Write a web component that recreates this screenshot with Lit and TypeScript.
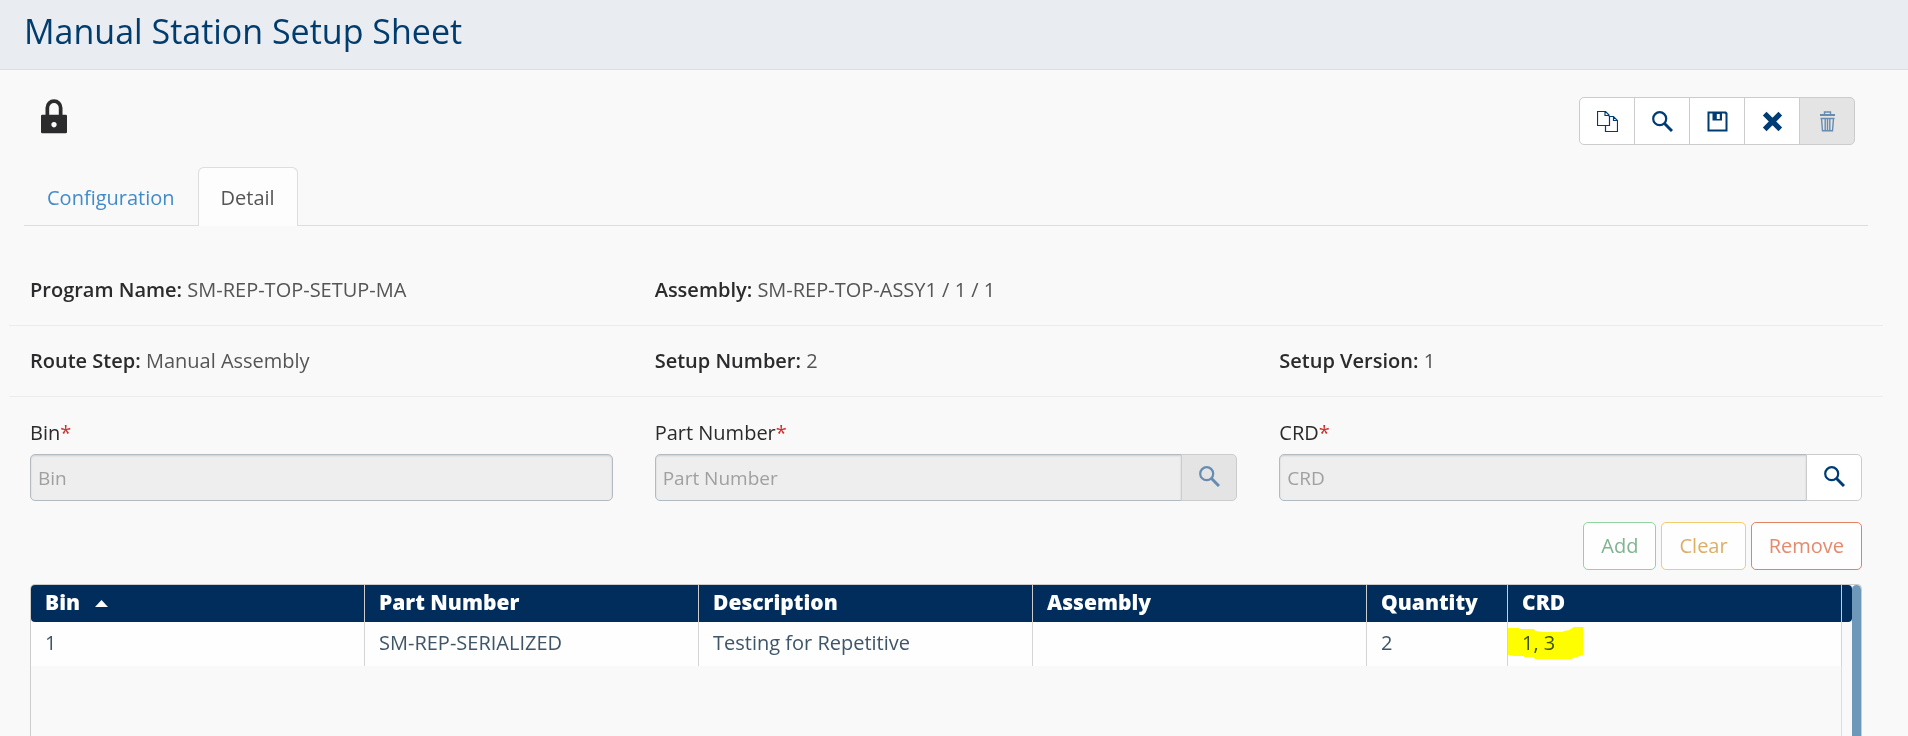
import { LitElement, html, css, svg, nothing } from "lit";
import { customElement, state } from "lit/decorators.js";

const icons = {
  copy: svg`<path d="M8 14.500H.5V.5h8l3.500 3.500v1.500M8 .5v4h4M8.500 14.500V20.500h12V9.500l-4-4h-4v9z M16.500 5.500v4h4" fill="none" stroke="currentColor" stroke-width="1.200"/>`,
  search: svg`<circle cx="7.700" cy="7.700" r="6.500" fill="none" stroke="currentColor" stroke-width="2.200"/>
    <path d="M12.500 12.500l7.500 7.500" stroke="currentColor" stroke-width="3"/>`,
  save: svg`<path fill="currentColor" fill-rule="evenodd" d="M.5.5h18.500l1.500 1.500v18.500H.5zM2.500 2.500v16h16V3.200l-1-.7h-2.500v7H5.500v-7zM9.800 3v5h3V3z"/>`,
  close: svg`<path d="M2.700 2.700l15.600 15.600M18.300 2.700L2.700 18.300" stroke="currentColor" stroke-width="5.200"/>`,
  trash: svg`<path d="M3 4h15" stroke="currentColor" stroke-width="2"/>
    <path d="M7.500 3V1h6v2M3.500 7.500h14M4.500 7.500l1 12.300h10l1-12.300M8.200 8v11M10.500 8v11M12.800 8v11" fill="none" stroke="currentColor" stroke-width="1.400"/>`,
};

type IconName = keyof typeof icons;
const icon = (name: IconName) =>
  html`<svg class="icon" viewBox="0 0 21 21" aria-hidden="true">${icons[name]}</svg>`;

@customElement("app-root")
export class AppRoot extends LitElement {
  static styles = css`
    :host { display: block; font: 400 20px/28px "Open Sans", sans-serif; color: #333; background: #f9f9f9; }
    * { box-sizing: border-box; }
    button, input { font: inherit; margin: 0; }
    .page { min-height: 100vh; display: flex; flex-direction: column; }
    .header { background: #e9ecf1; border-bottom: 1px solid #dcdfe3; padding: 7px 24px 14px; }
    .title { margin: 0; font-size: 34px; line-height: 48px; font-weight: 400; color: #003c6e; }
    .top { display: flex; justify-content: space-between; align-items: flex-start; padding: 27px 53px 0 40px; }
    .lock { width: 28px; height: 36px; margin-top: 1px; color: #2b2b2d; }
    .icon { width: 21px; height: 21px; display: block; }
    .tools { display: flex; }
    .tool { width: 56px; height: 48px; display: grid; place-items: center; padding: 0; background: #fff; border: 1px solid #ccc; color: #003c74; }
    .tool + .tool { margin-left: -1px; }
    .tool:first-child { border-radius: 5px 0 0 5px; }
    .tool:last-child { border-radius: 0 5px 5px 0; }
    .tool:disabled { background: #e4e4e4; color: #668cb1; }
    .tabs { display: flex; margin: 22px 40px 0 24px; border-bottom: 1px solid #ddd; }
    .tab { padding: 0 22px; height: 58px; line-height: 60px; color: #428bca; text-decoration: none; border: 1px solid transparent; border-bottom: 0; border-radius: 6px 6px 0 0; margin-bottom: -1px; }
    .tab.active { color: #555; font-weight: 500; background: #fdfdfd; border-color: #ddd; height: 59px; }
    .grid { margin: 29px 25px 0 9px; }
    .row { display: grid; grid-template-columns: repeat(3, 1fr); }
    .info { height: 71px; align-items: center; border-bottom: 1px solid #ececec; }
    .cell { padding: 0 21px; min-width: 0; }
    .value { color: #555; }
    .name { font-weight: 600; color: #2b2b2d; }
    .label { display: block; padding: 22px 0 7px; font-weight: 500; color: #2b2b2d; }
    .req { color: #c9302c; }
    .field { display: flex; }
    .input { flex: 1; min-width: 0; height: 47px; padding: 0 7px; border: 1px solid #b4bbc0; border-radius: 5px; background: #eee; box-shadow: inset 0 1px 2px #0002; color: #555; font-size: 19px; }
    .input::placeholder { color: #a0a0a0; opacity: 1; }
    .joined { border-radius: 5px 0 0 5px; }
    .find { width: 56px; margin-left: -1px; height: 47px; padding-bottom: 3px; border-radius: 0 5px 5px 0; }
    .actions { display: flex; justify-content: flex-end; gap: 5px; margin: 21px 46px 0 0; }
    .action { height: 48px; padding: 0 17px; border: 1px solid; border-radius: 5px; background: #fefefe; }
    .add { color: #80b38f; border-color: #93d3a0; }
    .clear { color: #dcae66; border-color: #f3cd6b; }
    .remove { color: #e58a6c; border-color: #e28463; }
    .frame { flex: 1; display: flex; align-items: stretch; margin: 14px 46px 0 30px; border: 1px solid #ccc; border-bottom: 0; border-radius: 5px 5px 0 0; }
    .tableWrap { flex: 1; min-width: 0; display: flex; flex-direction: column; }
    .table { width: 100%; table-layout: fixed; border-collapse: separate; border-spacing: 0; }
    .qty { width: 141px; }
    .gutter { width: 10px; }
    .th { height: 37px; padding: 0 14px 3px; background: #002d5c; color: #fff; font-size: 21px; font-weight: 800; text-align: left; border-right: 1px solid #ccc; }
    .th:first-child { border-radius: 4px 0 0 4px; }
    .th.end { padding: 0; border-right: 0; border-radius: 0 4px 4px 0; }
    .sort { display: inline-block; width: 13px; height: 7px; margin-left: 15px; vertical-align: 3px; }
    .td { height: 44px; padding: 0 14px 3px; background: #fefefe; color: #3f5568; border-right: 1px solid #d5d5d5; }
    .td.end { padding: 0; background: none; border-right: 0; }
    .rest { flex: 1; margin-right: 10px; border-right: 1px solid #ddd; }
    .marked { position: relative; }
    .mark { position: absolute; left: 0; top: 5px; width: 75px; height: 32px; fill: #ff0; mix-blend-mode: multiply; }
    .bar { width: 9px; background: #6d98ba; border-radius: 5px 5px 0 0; }
  `;

  @state() private rows = [["1", "SM-REP-SERIALIZED", "Testing for Repetitive", "", "2", "1, 3"]];

  private columns = ["Bin", "Part Number", "Description", "Assembly", "Quantity", "CRD"];

  private info(name: string, value: string) {
    return html`<div class="cell"><span class="name">${name}:</span> <span class="value">${value}</span></div>`;
  }

  private field(id: string, name: string, find?: "on" | "off") {
    return html`<div class="cell">
      <label class="label" for=${id}>${name}<span class="req">*</span></label>
      <div class="field">
        <input class="input ${find ? "joined" : ""}" id=${id} placeholder=${name} disabled />
        ${find
          ? html`<button class="tool find" aria-label="Find ${name}" ?disabled=${find === "off"}>${icon("search")}</button>`
          : nothing}
      </div>
    </div>`;
  }

  render() {
    return html`<main class="page">
      <header class="header"><h1 class="title">Manual Station Setup Sheet</h1></header>
      <div class="top">
        <svg class="lock" viewBox="0 0 28 36" role="img" aria-label="Locked">
          <path fill="currentColor" fill-rule="evenodd" d="M1 18q0-1.300 1.300-1.300H5.500V9.800a8.500 8.500 0 0 1 17 0v6.900h3.200Q27 16.700 27 18v16q0 1.300-1.300 1.300H2.300Q1 35.300 1 34zM9.200 16.700h9.600V10a4.800 5 0 0 0-9.600 0zM14 24a2.700 2.700 0 1 0 .01 0z"/>
        </svg>
        <div class="tools">
          <button class="tool" aria-label="Copy">${icon("copy")}</button>
          <button class="tool" aria-label="Search">${icon("search")}</button>
          <button class="tool" aria-label="Save">${icon("save")}</button>
          <button class="tool" aria-label="Cancel">${icon("close")}</button>
          <button class="tool" aria-label="Delete" disabled>${icon("trash")}</button>
        </div>
      </div>
      <nav class="tabs">
        <a class="tab" href="#configuration">Configuration</a>
        <a class="tab active" href="#detail" aria-current="page">Detail</a>
      </nav>
      <section class="grid">
        <div class="row info">
          ${this.info("Program Name", "SM-REP-TOP-SETUP-MA")}${this.info("Assembly", "SM-REP-TOP-ASSY1 / 1 / 1")}
        </div>
        <div class="row info">
          ${this.info("Route Step", "Manual Assembly")}${this.info("Setup Number", "2")}${this.info("Setup Version", "1")}
        </div>
        <div class="row">
          ${this.field("bin", "Bin")}${this.field("part", "Part Number", "off")}${this.field("crd", "CRD", "on")}
        </div>
      </section>
      <div class="actions">
        <button class="action add">Add</button>
        <button class="action clear">Clear</button>
        <button class="action remove">Remove</button>
      </div>
      <div class="frame">
        <div class="tableWrap">
          <table class="table">
            <colgroup><col /><col /><col /><col /><col class="qty" /><col /><col class="gutter" /></colgroup>
            <thead><tr>
              ${this.columns.map((c, i) => html`<th class="th" scope="col">${c}${i === 0
                ? html`<svg class="sort" viewBox="0 0 13 7" aria-hidden="true"><path d="M6.500 0L13 7H0z" fill="#fff"/></svg>`
                : nothing}</th>`)}
              <td class="th end"></td>
            </tr></thead>
            <tbody>
              ${this.rows.map((r) => html`<tr>
                ${r.map((v, i) => html`<td class="td ${i === 5 ? "marked" : ""}">${v}${i === 5
                  ? html`<svg class="mark" viewBox="0 0 75 32" aria-hidden="true"><path d="M0 1h11v1h15l1 2 9 1h18l2-1 5-1 5-3h9v28l-6 2-6 2H27l-2-2h-9v-1H6l-6-1z"/></svg>`
                  : nothing}</td>`)}
                <td class="td end"></td>
              </tr>`)}
            </tbody>
          </table>
          <div class="rest"></div>
        </div>
        <div class="bar"></div>
      </div>
    </main>`;
  }
}
